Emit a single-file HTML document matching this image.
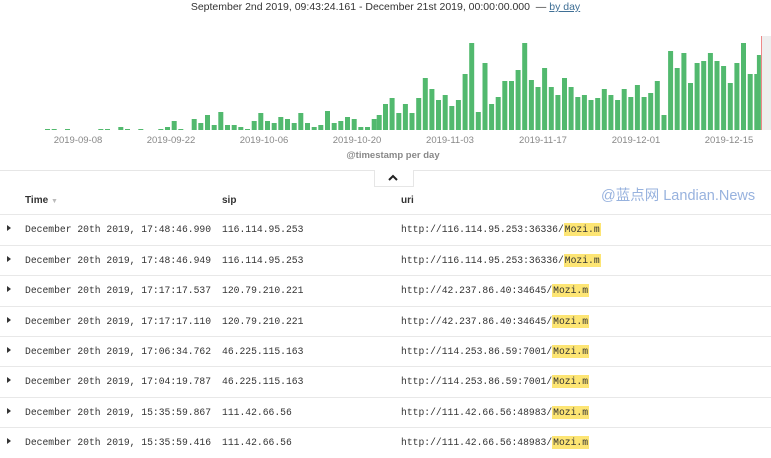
<!DOCTYPE html>
<html><head><meta charset="utf-8"><style>
body{margin:0;width:771px;height:450px;overflow:hidden;background:#fff;font-family:"Liberation Sans",sans-serif;position:relative}
.a{position:absolute}
.hdr{top:1px;left:0;width:771px;text-align:center;font-size:10.5px;color:#333}
.hdr u{color:#3f6f95}
.tick{top:135px;font-size:9.5px;color:#888;width:60px;text-align:center}
.row{position:absolute;left:0;width:771px;height:30px;border-top:1px solid #e8e8e8;font-family:"Liberation Mono",monospace;font-size:9.7px;color:#333}
.row span{position:absolute;top:9px}
.row .c{left:7px;top:10px;width:0;height:0;border-left:4px solid #333;border-top:3px solid transparent;border-bottom:3px solid transparent}
.hl{background:#fde574;padding:1px 1px}
</style></head><body>
<div class="a hdr">September 2nd 2019, 09:43:24.161 - December 21st 2019, 00:00:00.000 &nbsp;— <u>by day</u></div>
<svg class="a" style="left:0;top:0" width="771" height="135">
<rect x="762" y="36" width="9" height="94" fill="#eee"/>
<line x1="761.5" y1="36" x2="761.5" y2="130" stroke="#e88" stroke-width="1"/>
<g fill="#52b96e">
<rect x="45" y="129" width="5" height="1"/><rect x="51.7" y="129" width="5" height="1"/><rect x="65" y="129" width="5" height="1"/><rect x="98.3" y="129" width="5" height="1"/><rect x="105" y="129" width="5" height="1"/><rect x="118.3" y="127" width="5" height="3"/><rect x="125" y="129" width="5" height="1"/><rect x="138.3" y="129" width="5" height="1"/><rect x="158.3" y="129" width="5" height="1"/><rect x="165" y="127" width="5" height="3"/><rect x="171.7" y="121" width="5" height="9"/><rect x="178.3" y="129" width="5" height="1"/><rect x="191.7" y="119" width="5" height="11"/><rect x="198.3" y="123" width="5" height="7"/><rect x="205" y="115" width="5" height="15"/><rect x="211.7" y="125" width="5" height="5"/><rect x="218.3" y="112" width="5" height="18"/><rect x="225" y="125" width="5" height="5"/><rect x="231.7" y="125" width="5" height="5"/><rect x="238.3" y="127" width="5" height="3"/><rect x="245" y="129" width="5" height="1"/><rect x="251.7" y="121" width="5" height="9"/><rect x="258.3" y="113" width="5" height="17"/><rect x="265" y="121" width="5" height="9"/><rect x="271.7" y="123" width="5" height="7"/><rect x="278.3" y="117" width="5" height="13"/><rect x="285" y="119" width="5" height="11"/><rect x="291.7" y="123" width="5" height="7"/><rect x="298.3" y="113" width="5" height="17"/><rect x="305" y="123" width="5" height="7"/><rect x="311.7" y="127" width="5" height="3"/><rect x="318.3" y="125" width="5" height="5"/><rect x="325" y="111" width="5" height="19"/><rect x="331.7" y="123" width="5" height="7"/><rect x="338.3" y="121" width="5" height="9"/><rect x="345" y="117" width="5" height="13"/><rect x="351.7" y="119" width="5" height="11"/><rect x="358.3" y="127" width="5" height="3"/><rect x="365" y="127" width="5" height="3"/><rect x="371.7" y="119" width="5" height="11"/><rect x="376.7" y="115" width="5" height="15"/>
<rect x="383.0" y="104" width="5" height="26"/><rect x="389.6" y="98" width="5" height="32"/><rect x="396.3" y="113" width="5" height="17"/><rect x="402.9" y="104" width="5" height="26"/><rect x="409.5" y="113" width="5" height="17"/><rect x="416.2" y="98" width="5" height="32"/><rect x="422.8" y="78" width="5" height="52"/><rect x="429.4" y="89" width="5" height="41"/><rect x="436.0" y="100" width="5" height="30"/><rect x="442.7" y="95" width="5" height="35"/><rect x="449.3" y="106" width="5" height="24"/><rect x="455.9" y="100" width="5" height="30"/><rect x="462.6" y="74" width="5" height="56"/><rect x="469.2" y="43" width="5" height="87"/><rect x="475.8" y="112" width="5" height="18"/><rect x="482.5" y="63" width="5" height="67"/><rect x="489.1" y="104" width="5" height="26"/><rect x="495.7" y="97" width="5" height="33"/><rect x="502.3" y="81" width="5" height="49"/><rect x="509.0" y="81" width="5" height="49"/><rect x="515.6" y="70" width="5" height="60"/><rect x="522.2" y="43" width="5" height="87"/><rect x="528.9" y="80" width="5" height="50"/><rect x="535.5" y="87" width="5" height="43"/><rect x="542.1" y="68" width="5" height="62"/><rect x="548.8" y="87" width="5" height="43"/><rect x="555.4" y="95" width="5" height="35"/><rect x="562.0" y="78" width="5" height="52"/><rect x="568.6" y="87" width="5" height="43"/><rect x="575.3" y="97" width="5" height="33"/><rect x="581.9" y="95" width="5" height="35"/><rect x="588.5" y="100" width="5" height="30"/><rect x="595.2" y="98" width="5" height="32"/><rect x="601.8" y="89" width="5" height="41"/><rect x="608.4" y="95" width="5" height="35"/><rect x="615.1" y="100" width="5" height="30"/><rect x="621.7" y="89" width="5" height="41"/><rect x="628.3" y="97" width="5" height="33"/><rect x="634.9" y="85" width="5" height="45"/><rect x="641.6" y="97" width="5" height="33"/><rect x="648.2" y="93" width="5" height="37"/><rect x="654.8" y="81" width="5" height="49"/><rect x="661.5" y="115" width="5" height="15"/><rect x="668.1" y="51" width="5" height="79"/><rect x="674.7" y="68" width="5" height="62"/><rect x="681.4" y="53" width="5" height="77"/><rect x="688.0" y="83" width="5" height="47"/><rect x="694.6" y="63" width="5" height="67"/><rect x="701.2" y="61" width="5" height="69"/><rect x="707.9" y="53" width="5" height="77"/><rect x="714.5" y="61" width="5" height="69"/><rect x="721.1" y="66" width="5" height="64"/><rect x="727.8" y="83" width="5" height="47"/><rect x="734.4" y="63" width="5" height="67"/><rect x="741.0" y="43" width="5" height="87"/><rect x="747.7" y="74" width="5" height="56"/><rect x="754.3" y="74" width="5" height="56"/><rect x="756.9" y="55" width="4" height="75"/>
</g>
</svg>
<div class="a tick" style="left:48px">2019-09-08</div>
<div class="a tick" style="left:141px">2019-09-22</div>
<div class="a tick" style="left:234px">2019-10-06</div>
<div class="a tick" style="left:327px">2019-10-20</div>
<div class="a tick" style="left:420px">2019-11-03</div>
<div class="a tick" style="left:513px">2019-11-17</div>
<div class="a tick" style="left:606px">2019-12-01</div>
<div class="a tick" style="left:699px">2019-12-15</div>
<div class="a" style="top:150px;left:293px;width:200px;text-align:center;font-size:9.5px;font-weight:bold;color:#888">@timestamp per day</div>
<div class="a" style="top:170px;left:0;width:771px;border-top:1px solid #e6e6e6"></div>
<div class="a" style="top:170px;left:374px;width:38px;height:16px;background:#fff;border:1px solid #e6e6e6;border-top:none"></div>
<svg class="a" style="left:387px;top:173px" width="12" height="10"><path d="M2 7 L6 3 L10 7" fill="none" stroke="#222" stroke-width="2"/></svg>
<div class="a" style="top:195px;left:25px;font-size:10px;font-weight:bold;color:#333">Time <span style="color:#bbb;font-size:7px">▼</span></div>
<div class="a" style="top:195px;left:222px;font-size:10px;font-weight:bold;color:#333">sip</div>
<div class="a" style="top:195px;left:401px;font-size:10px;font-weight:bold;color:#333">uri</div>
<div class="a" style="top:184px;left:601px;font-family:'Liberation Sans','Noto Sans CJK SC',sans-serif;font-size:14.5px;color:#7e9fd6;opacity:.8">@蓝点网 Landian.News</div>
<div class="row" style="top:214px"><i class="c a"></i><span style="left:25px">December 20th 2019, 17:48:46.990</span><span style="left:222px">116.114.95.253</span><span style="left:401px">http://116.114.95.253:36336/<b class="hl" style="font-weight:normal">Mozi.m</b></span></div>
<div class="row" style="top:245px"><i class="c a"></i><span style="left:25px">December 20th 2019, 17:48:46.949</span><span style="left:222px">116.114.95.253</span><span style="left:401px">http://116.114.95.253:36336/<b class="hl" style="font-weight:normal">Mozi.m</b></span></div>
<div class="row" style="top:275px"><i class="c a"></i><span style="left:25px">December 20th 2019, 17:17:17.537</span><span style="left:222px">120.79.210.221</span><span style="left:401px">http://42.237.86.40:34645/<b class="hl" style="font-weight:normal">Mozi.m</b></span></div>
<div class="row" style="top:306px"><i class="c a"></i><span style="left:25px">December 20th 2019, 17:17:17.110</span><span style="left:222px">120.79.210.221</span><span style="left:401px">http://42.237.86.40:34645/<b class="hl" style="font-weight:normal">Mozi.m</b></span></div>
<div class="row" style="top:336px"><i class="c a"></i><span style="left:25px">December 20th 2019, 17:06:34.762</span><span style="left:222px">46.225.115.163</span><span style="left:401px">http://114.253.86.59:7001/<b class="hl" style="font-weight:normal">Mozi.m</b></span></div>
<div class="row" style="top:366px"><i class="c a"></i><span style="left:25px">December 20th 2019, 17:04:19.787</span><span style="left:222px">46.225.115.163</span><span style="left:401px">http://114.253.86.59:7001/<b class="hl" style="font-weight:normal">Mozi.m</b></span></div>
<div class="row" style="top:397px"><i class="c a"></i><span style="left:25px">December 20th 2019, 15:35:59.867</span><span style="left:222px">111.42.66.56</span><span style="left:401px">http://111.42.66.56:48983/<b class="hl" style="font-weight:normal">Mozi.m</b></span></div>
<div class="row" style="top:427px"><i class="c a"></i><span style="left:25px">December 20th 2019, 15:35:59.416</span><span style="left:222px">111.42.66.56</span><span style="left:401px">http://111.42.66.56:48983/<b class="hl" style="font-weight:normal">Mozi.m</b></span></div>
</body></html>
